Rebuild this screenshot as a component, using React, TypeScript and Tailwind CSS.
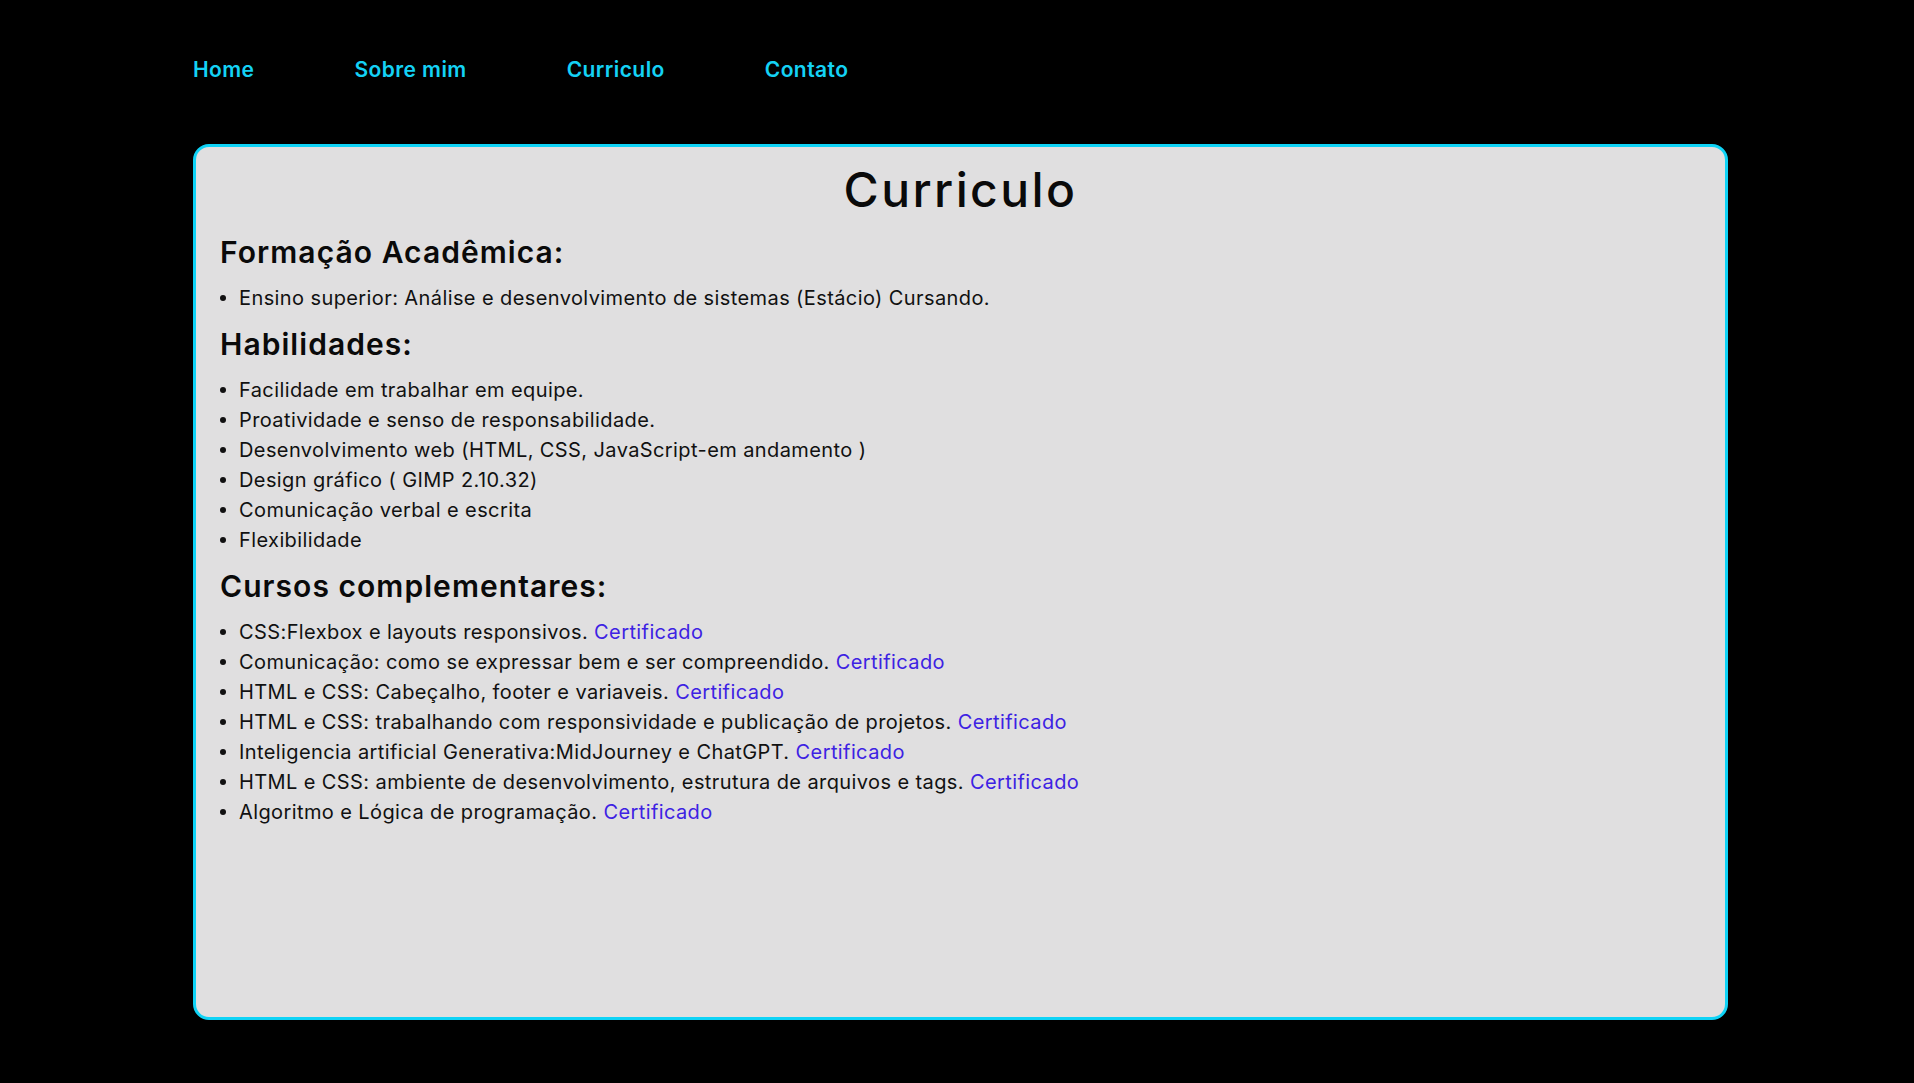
const font = { fontFamily: "Inter, 'Open Sans', sans-serif" };

const habilidades = [
  "Facilidade em trabalhar em equipe.",
  "Proatividade e senso de responsabilidade.",
  "Desenvolvimento web (HTML, CSS, JavaScript-em andamento )",
  "Design gráfico ( GIMP 2.10.32)",
  "Comunicação verbal e escrita",
  "Flexibilidade",
];

const cursos = [
  "CSS:Flexbox e layouts responsivos.",
  "Comunicação: como se expressar bem e ser compreendido.",
  "HTML e CSS: Cabeçalho, footer e variaveis.",
  "HTML e CSS: trabalhando com responsividade e publicação de projetos.",
  "Inteligencia artificial Generativa:MidJourney e ChatGPT.",
  "HTML e CSS: ambiente de desenvolvimento, estrutura de arquivos e tags.",
  "Algoritmo e Lógica de programação.",
];

function Item({ children }: { children: React.ReactNode }) {
  return (
    <li className="flex items-center gap-[13px] text-[20px] leading-[30px] tracking-[0.02em] text-[#111]">
      <span className="h-[6px] w-[6px] shrink-0 rounded-full bg-[#111]" />
      <span>{children}</span>
    </li>
  );
}

export default function App() {
  return (
    <main className="min-h-screen bg-black pb-[63px] pl-[193px] pr-[186px] pt-[57px]" style={font}>
      <nav className="flex gap-[100px] text-[21px] font-semibold leading-[26px] tracking-[0.02em] text-[#14d2f5]">
        <a href="#">Home</a>
        <a href="#">Sobre mim</a>
        <a href="#">Curriculo</a>
        <a href="#">Contato</a>
      </nav>

      <section className="mt-[61px] h-[876px] rounded-[16px] border-[3px] border-[#0fd3f6] bg-[#e0dfe0] px-[24px] pt-[15px]">
        <h1 className="text-center text-[48px] font-medium leading-[56px] tracking-[0.05em] text-[#0a0a0a]">Curriculo</h1>

        <h2 className="mt-[17px] text-[30px] font-semibold leading-[34px] tracking-[0.035em] text-[#0a0a0a]">
          Formação Acadêmica:
        </h2>
        <ul className="mt-[14px]">
          <Item>Ensino superior: Análise e desenvolvimento de sistemas (Estácio) Cursando.</Item>
        </ul>

        <h2 className="mt-[14px] text-[30px] font-semibold leading-[34px] tracking-[0.035em] text-[#0a0a0a]">
          Habilidades:
        </h2>
        <ul className="mt-[14px]">
          {habilidades.map((h) => (
            <Item key={h}>{h}</Item>
          ))}
        </ul>

        <h2 className="mt-[14px] text-[30px] font-semibold leading-[34px] tracking-[0.035em] text-[#0a0a0a]">
          Cursos complementares:
        </h2>
        <ul className="mt-[14px]">
          {cursos.map((c) => (
            <Item key={c}>
              {c}{" "}
              <a href="#" className="text-[#3d22e3]">
                Certificado
              </a>
            </Item>
          ))}
        </ul>
      </section>
    </main>
  );
}
